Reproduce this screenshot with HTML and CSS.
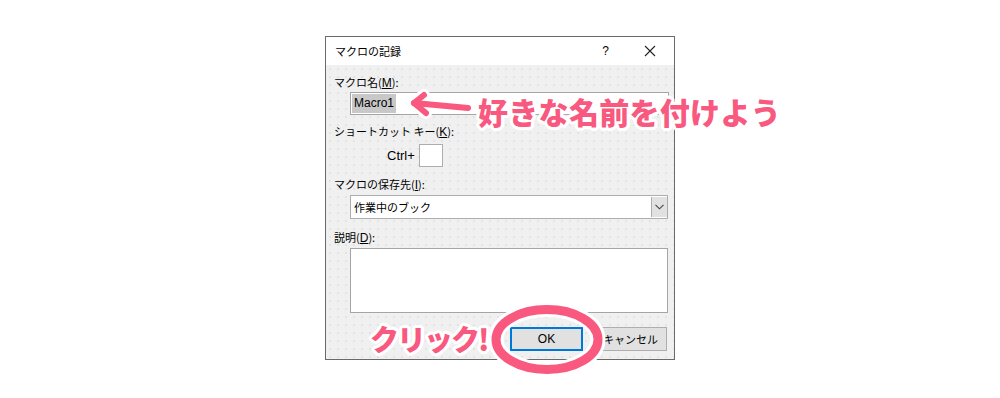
FILE: index.html
```html
<!DOCTYPE html>
<html lang="ja">
<head>
    <meta charset="UTF-8">
    <title>マクロの記録</title>
    <link rel="stylesheet" href="styles.css">
</head>
<body>
    <div class="page">
        <div class="dialog">
            <div class="titlebar">
                <span class="title">マクロの記録</span>
                <span class="help">?</span>
                <svg class="close" width="12" height="12" viewBox="0 0 12 12">
                    <path d="M1 1 L11 11 M11 1 L1 11" stroke="#222" stroke-width="1.1" fill="none"/>
                </svg>
            </div>
            <div class="panel">
                <div class="lbl">マクロ名(<u>M</u>):</div>
                <div class="field name-box"><span class="sel">Macro1</span></div>

                <div class="lbl gap1">ショートカット キー(<u>K</u>):</div>
                <div class="shortcut">
                    <span class="ctrl">Ctrl+</span>
                    <div class="key"></div>
                </div>

                <div class="lbl gap2">マクロの保存先(<u>I</u>):</div>
                <div class="field combo">
                    <span class="combo-text">作業中のブック</span>
                    <div class="drop">
                        <svg width="9" height="6" viewBox="0 0 9 6">
                            <path d="M0.5 0.8 L4.5 4.8 L8.5 0.8" stroke="#444" stroke-width="1.1" fill="none"/>
                        </svg>
                    </div>
                </div>

                <div class="lbl gap3">説明(<u>D</u>):</div>
                <div class="field desc"></div>

                <div class="buttons">
                    <div class="btn ok">OK</div>
                    <div class="btn">キャンセル</div>
                </div>
            </div>
        </div>

        <!-- annotations drawn over the dialog -->
        <svg class="marks" width="1000" height="398" viewBox="0 0 1000 398">
            <g stroke="#fff" stroke-width="12" stroke-linecap="round" stroke-linejoin="round" fill="none">
                <path d="M414 103 L468 108"/>
                <path d="M424 95 L414 103 L426 113"/>
            </g>
            <ellipse cx="547" cy="339.5" rx="51" ry="30" stroke="#fff" stroke-width="15" fill="none"/>
            <g stroke="#f9587f" stroke-width="6" stroke-linecap="round" stroke-linejoin="round" fill="none">
                <path d="M414 103 L468 108"/>
                <path d="M424 95 L414 103 L426 113"/>
            </g>
            <ellipse cx="547" cy="339.5" rx="51" ry="30" stroke="#f9587f" stroke-width="9" fill="none"/>
        </svg>
        <div class="note name-note">好きな名前を付けよう</div>
        <div class="note click-note">クリック!</div>
    </div>
</body>
</html>
```

FILE: styles.css
```css
body {
    margin: 0;
    background: #fff;
    font-family: "Noto Sans CJK JP", "Noto Sans", sans-serif;
}
.page {
    position: relative;
    width: 1000px;
    height: 398px;
    overflow: hidden;
}
.dialog {
    margin-left: 325px;
    margin-top: 36px;
    width: 348px;
    border: 1px solid #6a6a6a;
    background: #fff;
}
.titlebar {
    height: 28px;
    display: flex;
    align-items: center;
    padding-left: 9px;
    font-size: 11px;
    color: #000;
}
.title {
    flex-grow: 1;
}
.help {
    font-family: "Liberation Sans", sans-serif;
    font-size: 12px;
    margin-right: 35px;
}
.close {
    margin-right: 18px;
}
.panel {
    background-color: #f0f0f0;
    background-image: radial-gradient(circle, #dcdcdc 0.6px, transparent 0.9px);
    background-size: 8px 8px;
    padding: 10px 7px 8px 7px;
    font-size: 11px;
    color: #000;
}
.lbl {
    height: 14px;
    line-height: 14px;
    padding-left: 1px;
}
.lbl u {
    font-family: "Liberation Sans", sans-serif;
    font-size: 12px;
}
.gap1 { margin-top: 9px; }
.gap2 { margin-top: 10px; }
.gap3 { margin-top: 11px; }
.field {
    margin-left: 17px;
    width: 316px;
    border: 1px solid #a5a5a5;
    background: #fff;
}
.name-box {
    margin-top: 3px;
    height: 21px;
    display: flex;
    align-items: center;
    padding-left: 1px;
}
.sel {
    background: #c8c8c8;
    font-family: "Liberation Sans", sans-serif;
    font-size: 12px;
    line-height: 19px;
    padding: 0 2px;
}
.shortcut {
    margin-top: 6px;
    display: flex;
    align-items: center;
    padding-left: 54px;
}
.ctrl {
    font-family: "Liberation Sans", sans-serif;
    font-size: 13px;
    margin-right: 4px;
}
.key {
    width: 22px;
    height: 21px;
    border: 1px solid #adadad;
    background: #fff;
}
.combo {
    margin-top: 4px;
    height: 22px;
    display: flex;
    align-items: center;
    border-color: #adadad;
}
.combo-text {
    flex-grow: 1;
    padding-left: 3px;
    font-size: 11px;
}
.drop {
    width: 15px;
    height: 20px;
    background: #e1e1e1;
    border-left: 1px solid #adadad;
    display: flex;
    align-items: center;
    justify-content: center;
}
.desc {
    margin-top: 4px;
    height: 63px;
}
.buttons {
    margin-top: 14px;
    display: flex;
    justify-content: flex-end;
    gap: 11px;
}
.btn {
    width: 71px;
    height: 22px;
    border: 1px solid #adadad;
    background: #e1e1e1;
    display: flex;
    align-items: center;
    justify-content: center;
    font-size: 11px;
}
.ok {
    width: 69px;
    height: 20px;
    border: 2px solid #0078d7;
    font-family: "Liberation Sans", sans-serif;
    font-size: 12px;
}
.marks {
    position: absolute;
    left: 0;
    top: 0;
}
.note {
    position: absolute;
    color: #f9587f;
    font-weight: 900;
    white-space: nowrap;
    text-shadow:
        3px 0 0 #fff, -3px 0 0 #fff, 0 3px 0 #fff, 0 -3px 0 #fff,
        2px 2px 0 #fff, -2px 2px 0 #fff, 2px -2px 0 #fff, -2px -2px 0 #fff,
        3px 1px 0 #fff, -3px 1px 0 #fff, 3px -1px 0 #fff, -3px -1px 0 #fff,
        1px 3px 0 #fff, -1px 3px 0 #fff, 1px -3px 0 #fff, -1px -3px 0 #fff;
}
.name-note {
    left: 478px;
    top: 89px;
    font-size: 30px;
    line-height: 44px;
    letter-spacing: 0.3px;
}
.click-note {
    left: 370px;
    top: 317px;
    font-size: 29px;
    line-height: 42px;
    letter-spacing: -2px;
}
```
